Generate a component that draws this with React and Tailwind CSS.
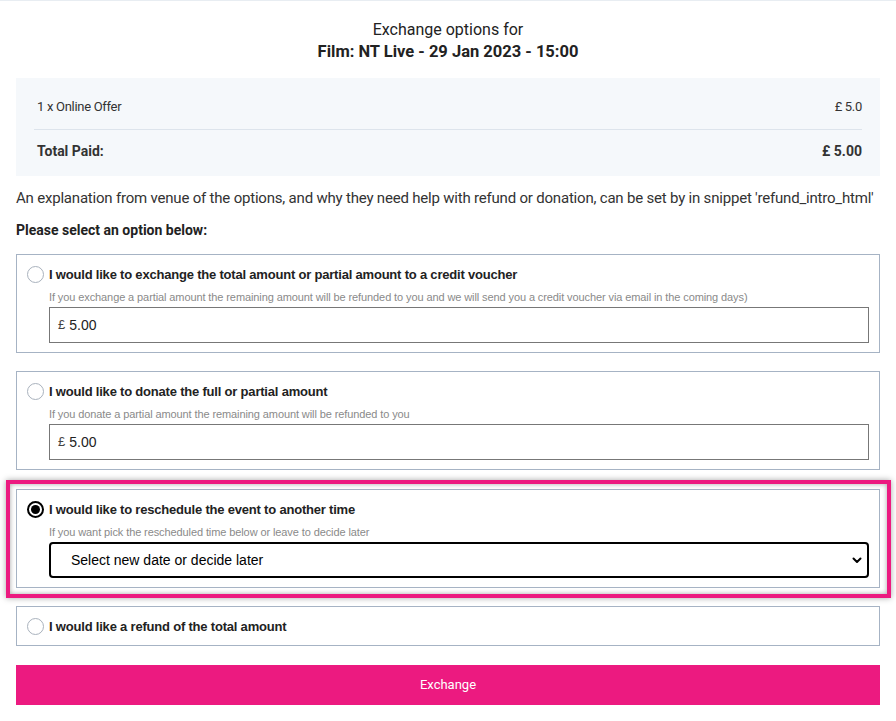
import React from 'react';

const Radio = ({ checked }) => (
  <span
    className={`w-[17px] h-[17px] rounded-full border flex items-center justify-center shrink-0 bg-white ${
      checked ? 'border-black border-2' : 'border-[#a9b2bd]'
    }`}
  >
    {checked && <span className="w-[9px] h-[9px] rounded-full bg-black" />}
  </span>
);

const AmountInput = () => (
  <div className="h-[36px] border border-[#777] flex items-center px-2 text-[14px] text-[#222]">
    <span className="text-[13px] mr-1 text-[#444]">£</span>5.00
  </div>
);

const Option = ({ label, hint, checked, children }) => (
  <div className="border border-[#a6b3c4] bg-white pl-[10px] pr-[10px] pt-[10px] pb-[9px]">
    <div className="flex items-center gap-[5px] h-[19px]">
      <Radio checked={checked} />
      <span className="font-bold text-[13px] tracking-[-0.2px] text-[#222]">{label}</span>
    </div>
    {hint && (
      <div className="pl-[22px]">
        <p className="text-[11px] tracking-[-0.1px] text-[#8a8a8a] mt-[6px] mb-[3px] leading-[14px]">{hint}</p>
        {children}
      </div>
    )}
  </div>
);

export default function App() {
  return (
    <div className="min-h-screen bg-white border-t border-[#e8edf2] px-4" style={{ fontFamily: '"Liberation Sans", Arial, sans-serif' }}>
      {/* Heading */}
      <div className="text-center pt-[19px] text-[#222]" style={{ fontFamily: 'Roboto, sans-serif' }}>
        <div className="text-[16px] leading-[20px]">Exchange options for</div>
        <div className="text-[16.5px] leading-[24px] font-bold">Film: NT Live - 29 Jan 2023 - 15:00</div>
      </div>

      {/* Summary */}
      <div className="mt-[14px] bg-[#f5f8fb] px-[18px] pt-[19px] pb-[14px] text-[#333]" style={{ fontFamily: 'Roboto, sans-serif' }}>
        <div className="flex justify-between text-[13px] tracking-[-0.3px] pb-[12px] pl-[3px] border-b border-[#dde4ec]">
          <span>1 x Online Offer</span>
          <span>£ 5.0</span>
        </div>
        <div className="flex justify-between text-[14px] font-bold pt-[11px] pl-[3px]">
          <span>Total Paid:</span>
          <span>£ 5.00</span>
        </div>
      </div>

      <p className="mt-[11px] text-[15px] text-[#333] tracking-[-0.2px]" style={{ fontFamily: 'Roboto, sans-serif' }}>
        An explanation from venue of the options, and why they need help with refund or donation, can be set by in snippet 'refund_intro_html'
      </p>
      <p className="mt-[11px] text-[14px] font-bold text-[#222]" style={{ fontFamily: 'Roboto, sans-serif' }}>
        Please select an option below:
      </p>

      <div className="mt-[13px] flex flex-col gap-[18px]">
        <Option
          label="I would like to exchange the total amount or partial amount to a credit voucher"
          hint="If you exchange a partial amount the remaining amount will be refunded to you and we will send you a credit voucher via email in the coming days)"
        >
          <AmountInput />
        </Option>
        <Option
          label="I would like to donate the full or partial amount"
          hint="If you donate a partial amount the remaining amount will be refunded to you"
        >
          <AmountInput />
        </Option>

        {/* Highlighted option */}
        <div className="-ml-[10px] -mr-[11px] -mt-[8px] -mb-[10px] border-4 border-[#ec1a80] pl-[6px] pr-[7px] pt-[5px] pb-[6px] shadow-[0_0_6px_rgba(0,0,0,0.35),inset_0_0_5px_rgba(0,0,0,0.35)]">
          <Option
            checked
            label="I would like to reschedule the event to another time"
            hint="If you want pick the rescheduled time below or leave to decide later"
          >
            <div className="h-[36px] border-2 border-black rounded-[4px] flex items-center justify-between pl-[20px] pr-[4px] text-[14px] text-black">
              <span>Select new date or decide later</span>
              <svg width="12" height="12" viewBox="0 0 12 12" fill="none">
                <path d="M2.5 4.5 L6 8 L9.5 4.5" stroke="black" strokeWidth="2" strokeLinecap="round" strokeLinejoin="round" />
              </svg>
            </div>
          </Option>
        </div>

        <Option label="I would like a refund of the total amount" />
      </div>

      <button className="mt-[19px] w-full h-[40px] bg-[#ec1a80] text-white text-[13px]" style={{ fontFamily: 'Roboto, sans-serif' }}>
        Exchange
      </button>
    </div>
  );
}
